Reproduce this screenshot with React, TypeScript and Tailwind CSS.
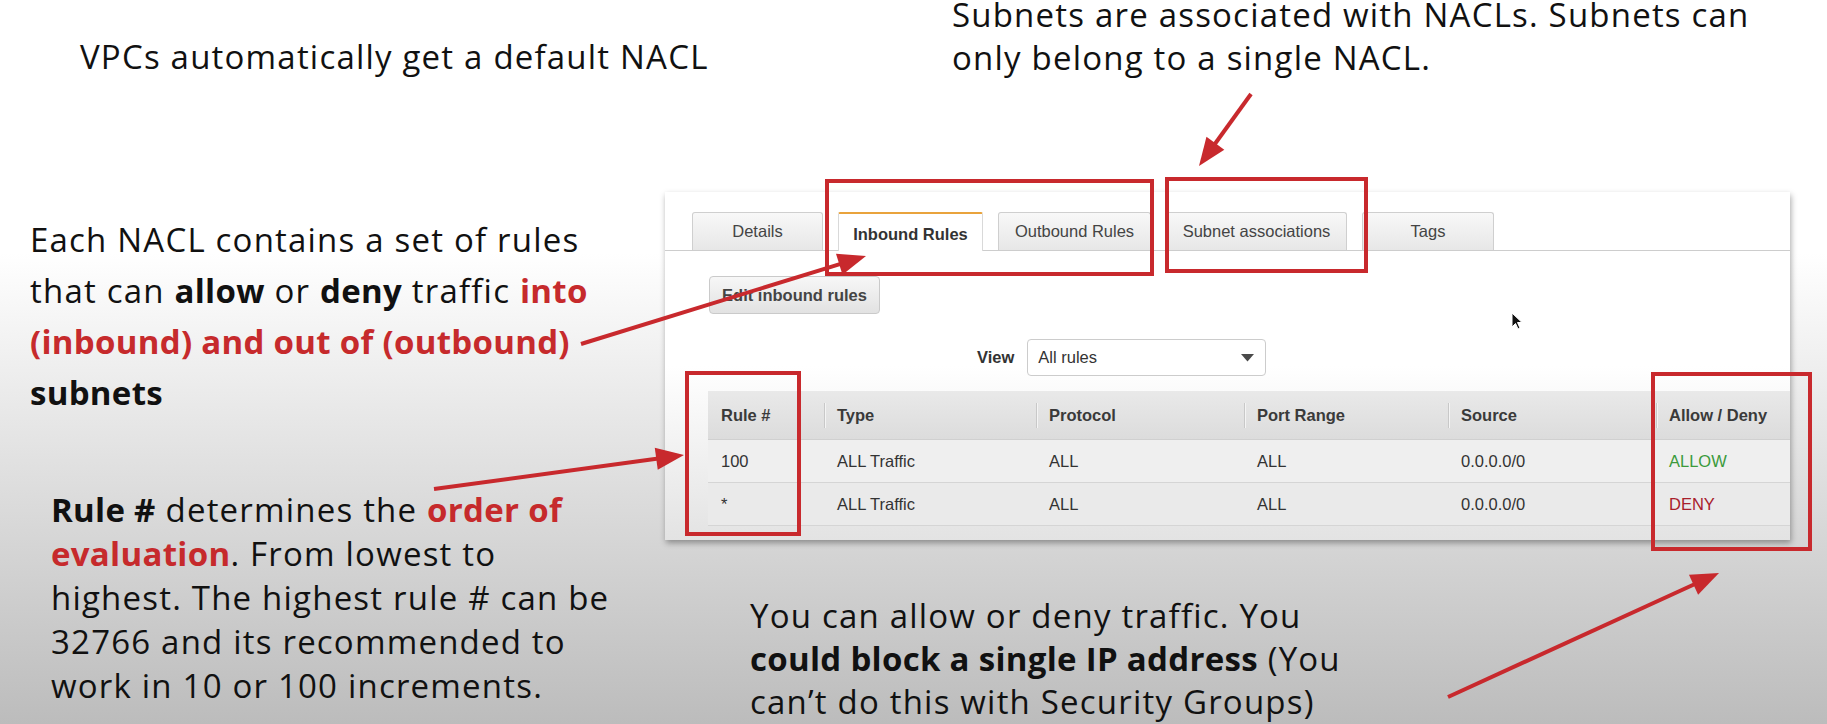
import React from "react";

const RED = "#c8292d";

function head(x0: number, y0: number, x1: number, y1: number, L = 28, W = 11) {
  const dx = x1 - x0;
  const dy = y1 - y0;
  const len = Math.hypot(dx, dy);
  const ux = dx / len;
  const uy = dy / len;
  const bx = x1 - ux * L;
  const by = y1 - uy * L;
  const nx = -uy;
  const ny = ux;
  return {
    pts: `${x1},${y1} ${bx + nx * W},${by + ny * W} ${bx - nx * W},${by - ny * W}`,
    bx: x1 - ux * (L - 4),
    by: y1 - uy * (L - 4),
  };
}

const ARROWS: [number, number, number, number][] = [
  [581, 344, 866, 256],
  [434, 489, 684, 455],
  [1251, 94, 1199, 166],
  [1448, 697, 1719, 573],
];

const R = ({ children }: { children: React.ReactNode }) => (
  <span className="font-bold tracking-[0.3px] text-[#c62a2c]">{children}</span>
);
const B = ({ children }: { children: React.ReactNode }) => (
  <span className="font-bold tracking-[0.3px]">{children}</span>
);

const TABS = [
  { label: "Details", w: "w-[131px]" },
  { label: "Inbound Rules", w: "w-[145px]", active: true },
  { label: "Outbound Rules", w: "w-[153px]" },
  { label: "Subnet associations", w: "w-[181px]" },
  { label: "Tags", w: "w-[132px]" },
];

const HEAD = ["Rule #", "Type", "Protocol", "Port Range", "Source", "Allow / Deny"];
const ROWS = [
  ["100", "ALL Traffic", "ALL", "ALL", "0.0.0.0/0", "ALLOW"],
  ["*", "ALL Traffic", "ALL", "ALL", "0.0.0.0/0", "DENY"],
];

function Card() {
  return (
    <div className="mt-[119px] w-[1125px] h-[348px] shrink-0 flex flex-col bg-linear-to-b from-white from-50% to-[#e3e3e3] shadow-[1px_3px_6px_rgba(0,0,0,0.35)] font-['Liberation_Sans',Arial,sans-serif] text-[16.5px] tracking-normal text-[#333]">
      <div className="h-[59px] pt-[20px] pl-[27px] flex items-end gap-[15px] border-b border-[#cdcdcd] shrink-0">
        {TABS.map((t) =>
          t.active ? (
            <div
              key={t.label}
              className={`${t.w} h-[39px] -mb-px bg-white border-t-2 border-t-[#e9a33c] border-x border-x-[#d9d9d9] rounded-t-[2px] flex items-center justify-center font-bold text-[#333] pt-[3px]`}
            >
              {t.label}
            </div>
          ) : (
            <div
              key={t.label}
              className={`${t.w} h-[38px] bg-linear-to-b from-[#f8f8f8] to-[#e7e7e7] border border-b-0 border-[#cfcfcf] rounded-t-[3px] flex items-center justify-center text-[#444]`}
            >
              {t.label}
            </div>
          )
        )}
      </div>

      <div className="mt-[25px] ml-[44px] w-[171px] h-[38px] shrink-0 rounded-[4px] border border-[#cacaca] bg-linear-to-b from-[#f7f7f7] to-[#e2e2e2] flex items-center justify-center font-bold text-[#444]">
        Edit inbound rules
      </div>

      <div className="mt-[25px] pl-[312px] flex items-center gap-[13px] shrink-0">
        <span className="font-bold text-[#333]">View</span>
        <div className="w-[239px] h-[37px] rounded-[4px] border border-[#cccccc] bg-white flex items-center justify-between pl-[10px] pr-[11px] text-[#333]">
          <span>All rules</span>
          <svg width="13" height="8" viewBox="0 0 13 8">
            <path d="M0 0 L13 0 L6.5 7.5 Z" fill="#4a4a4a" />
          </svg>
        </div>
      </div>

      <div className="mt-[15px] ml-[43px] flex flex-col">
        <div className="grid grid-cols-[116px_212px_208px_204px_208px_134px] h-[49px] bg-linear-to-b from-[#e9e9e9] to-[#dcdcdc] border-b border-[#d0d0d0] font-bold text-[#3a3a3a]">
          {HEAD.map((h, i) => (
            <div key={h} className="flex items-center">
              {i > 0 ? <div className="w-px h-[25px] bg-[#c8c8c8] shadow-[1px_0_0_#f4f4f4]" /> : null}
              <span className={i > 0 ? "ml-[12px]" : "ml-[13px]"}>{h}</span>
            </div>
          ))}
        </div>
        {ROWS.map((r, ri) => (
          <div
            key={ri}
            className={`grid grid-cols-[116px_212px_208px_204px_208px_134px] h-[43px] border-b border-[#d5d5d5] ${
              ri === 0 ? "bg-[#efefef]" : "bg-[#eaeaea]"
            }`}
          >
            {r.map((c, ci) => (
              <div
                key={ci}
                className={`flex items-center pl-[13px] ${
                  ci === 5 ? (c === "ALLOW" ? "text-[#3b9a3b]" : "text-[#a8202c]") : "text-[#333]"
                }`}
              >
                {c}
              </div>
            ))}
          </div>
        ))}
      </div>
    </div>
  );
}

export default function App() {
  return (
    <div className="relative w-[1827px] h-[724px] overflow-hidden bg-linear-to-b from-white from-[35%] to-[#bcbcbc] font-['Open_Sans',sans-serif] text-[33px] tracking-[1.2px] text-[#111]">
      <div className="flex h-full">
        <div className="w-[665px] shrink-0 flex flex-col">
          <p className="ml-[80px] mt-[37px] leading-[40px] whitespace-nowrap">
            VPCs automatically get a default NACL
          </p>
          <p className="ml-[30px] mt-[137px] leading-[51px] whitespace-nowrap">
            Each NACL contains a set of rules
            <br />
            that can <B>allow</B> or <B>deny</B> traffic <R>into</R>
            <br />
            <R>(inbound) and out of (outbound)</R>
            <br />
            <B>subnets</B>
          </p>
          <p className="ml-[51px] mt-[70px] leading-[44px] whitespace-nowrap">
            <B>Rule #</B> determines the <R>order of</R>
            <br />
            <R>evaluation</R>. From lowest to
            <br />
            highest. The highest rule # can be
            <br />
            32766 and its recommended to
            <br />
            work in 10 or 100 increments.
          </p>
        </div>
        <div className="flex-1 flex flex-col">
          <div className="ml-[287px] flex flex-col gap-[13px] whitespace-nowrap">
            <p className="leading-[30px]">Subnets are associated with NACLs. Subnets can</p>
            <p className="leading-[30px]">only belong to a single NACL.</p>
          </div>
          <Card />
          <p className="ml-[85px] mt-[54px] leading-[43px] whitespace-nowrap">
            You can allow or deny traffic. You
            <br />
            <B>could block a single IP address</B> (You
            <br />
            can’t do this with Security Groups)
          </p>
        </div>
      </div>

      {/* annotation boxes */}
      <div className="absolute left-[825px] top-[179px] w-[329px] h-[97px] border-4 border-[#c8292d]" />
      <div className="absolute left-[1165px] top-[177px] w-[203px] h-[96px] border-4 border-[#c8292d]" />
      <div className="absolute left-[685px] top-[371px] w-[116px] h-[165px] border-4 border-[#c8292d]" />
      <div className="absolute left-[1651px] top-[372px] w-[161px] h-[179px] border-4 border-[#c8292d]" />

      {/* cursor */}
      <svg className="absolute left-[1511px] top-[312px]" width="12" height="19" viewBox="0 0 12 19">
        <path d="M1 1 L1 15 L4.5 11.5 L7 17 L9 16 L6.5 10.5 L11 10.5 Z" fill="#111" stroke="#fff" strokeWidth="1" />
      </svg>

      {/* arrows */}
      <svg className="absolute inset-0 pointer-events-none" width="1827" height="724" viewBox="0 0 1827 724">
        {ARROWS.map(([x0, y0, x1, y1], i) => {
          const h = head(x0, y0, x1, y1);
          return (
            <g key={i}>
              <line x1={x0} y1={y0} x2={h.bx} y2={h.by} stroke={RED} strokeWidth="4" />
              <polygon points={h.pts} fill={RED} />
            </g>
          );
        })}
      </svg>
    </div>
  );
}
